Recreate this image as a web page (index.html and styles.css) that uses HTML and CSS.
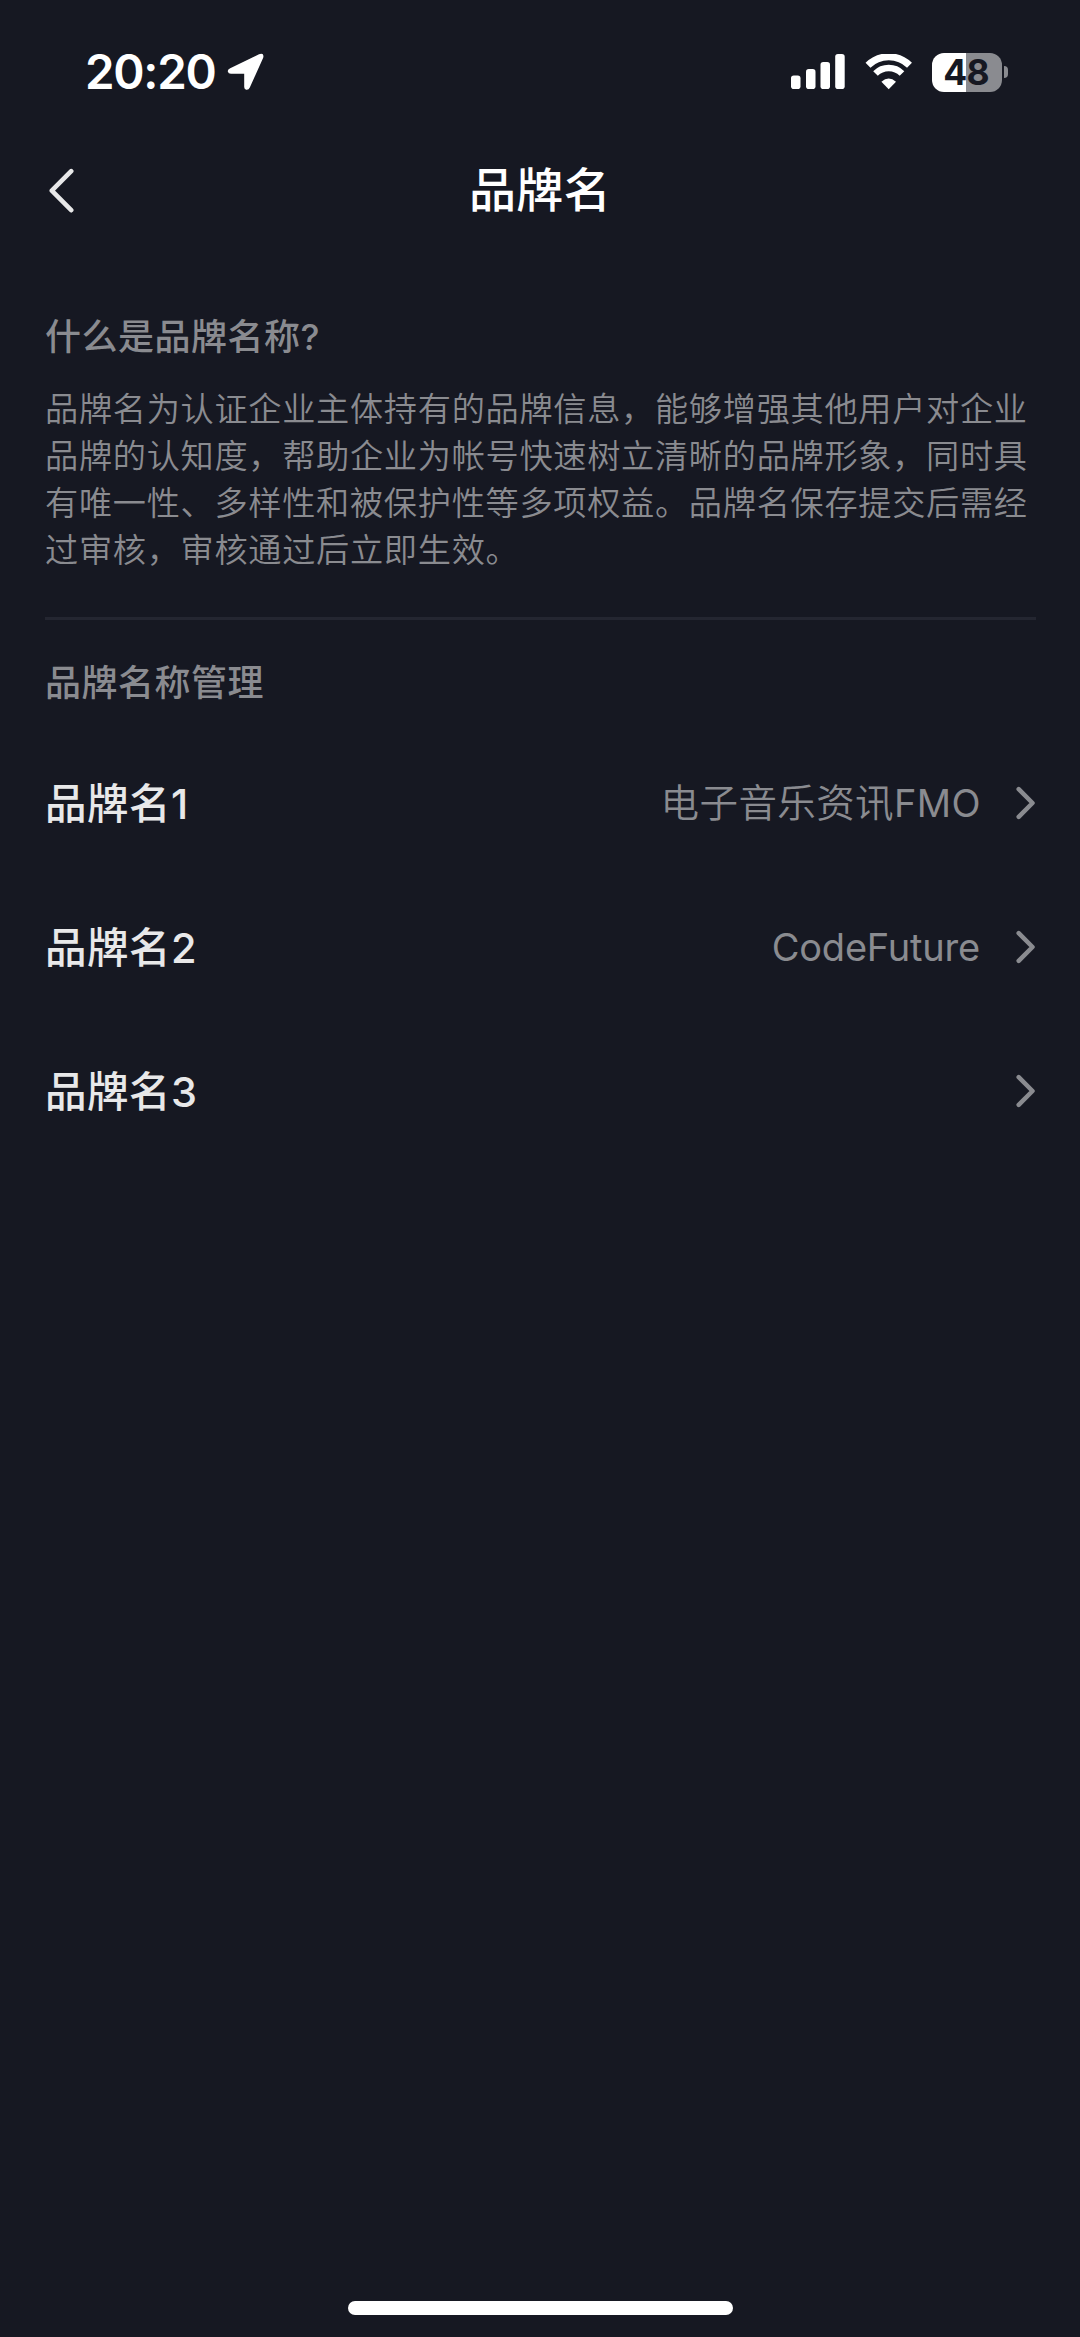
FILE: index.html
```html
<!DOCTYPE html>
<html lang="zh-CN">
<head>
<meta charset="utf-8">
<title>品牌名</title>
<link rel="stylesheet" href="styles.css">
</head>
<body>
<div class="screen">
  <header class="status">
    <div class="status-left">
      <span class="time">20:20</span>
      <svg class="location" width="38" height="38" viewBox="0 0 38 38"><path d="M3.200 15.300 32 1.200Q37.500-.5 36.200 4.800L22.800 34.600Q21.600 37.200 19.100 36.700 17.200 36.200 17.200 34V20.700H3.900Q1.300 20.600.8 18.400.5 16.600 3.200 15.300Z" fill="#fff"/></svg>
    </div>
    <div class="status-right">
      <svg width="54" height="36" viewBox="0 0 54 36" fill="#fff"><rect y="21.500" width="9.500" height="13.500" rx="2.800"/><rect x="15" y="15" width="9.500" height="20" rx="2.800"/><rect x="29.500" y="8" width="9.500" height="27" rx="2.800"/><rect x="44.200" y="0" width="9.500" height="35" rx="2.800"/></svg>
      <svg class="wifi" width="48" height="36" viewBox="0 0 48 36" fill="none" stroke="#fff"><path d="M3 11.300a29.500 29.500 0 0 1 41.500 0" stroke-width="7"/><path d="M10.500 19.500a18.800 18.800 0 0 1 26.500 0" stroke-width="6.500"/><path d="M23.700 35.300 16.400 27.800Q23.700 21 31 27.800Z" fill="#fff" stroke="none"/></svg>
      <div class="battery"><span class="battery-body">48</span><span class="battery-tip"></span></div>
    </div>
  </header>
  <nav class="nav">
    <svg class="back" width="28" height="48" viewBox="0 0 28 48"><path d="M25.200 4.200 5.800 23.700 25.200 43.200" fill="none" stroke="#e8e8e9" stroke-width="4.600" stroke-linecap="round" stroke-linejoin="round"/></svg>
    <h1 class="title">品牌名</h1>
  </nav>
  <main class="content">
    <section class="intro">
      <h2 class="heading">什么是品牌名称?</h2>
      <p class="description">品牌名为认证企业主体持有的品牌信息，能够增强其他用户对企业<br>品牌的认知度，帮助企业为帐号快速树立清晰的品牌形象，同时具<br>有唯一性、多样性和被保护性等多项权益。品牌名保存提交后需经<br>过审核，审核通过后立即生效。</p>
    </section>
    <section class="manage">
      <h2 class="heading">品牌名称管理</h2>
      <ul class="list">
        <li class="row"><span class="label">品牌名1</span><span class="value">电子音乐资讯<span class="regular">FMO</span></span><svg class="chevron" width="22" height="36" viewBox="0 0 22 36"><path d="M4.700 4.200 18.500 18 4.700 31.800"/></svg></li>
        <li class="row"><span class="label">品牌名2</span><span class="value latin">CodeFuture</span><svg class="chevron" width="22" height="36" viewBox="0 0 22 36"><path d="M4.700 4.200 18.500 18 4.700 31.800"/></svg></li>
        <li class="row"><span class="label">品牌名3</span><span class="value"></span><svg class="chevron" width="22" height="36" viewBox="0 0 22 36"><path d="M4.700 4.200 18.500 18 4.700 31.800"/></svg></li>
      </ul>
    </section>
  </main>
  <div class="home-indicator"></div>
</div>
</body>
</html>
```
FILE: styles.css
```css
* { box-sizing: border-box; }
body {
  margin: 0;
  background: #161822;
  color: #e8e8e9;
  font-family: Inter, "Noto Sans CJK SC", sans-serif;
}
h1, h2, p, ul { margin: 0; padding: 0; }
svg { display: block; flex: none; }
.screen { height: 2337px; display: flex; flex-direction: column; }
.status {
  height: 144px;
  padding: 0 72px 0 85px;
  display: flex;
  justify-content: space-between;
  align-items: center;
  color: #fff;
}
.status-left, .status-right { display: flex; align-items: center; }
.status-left { gap: 11px; }
.time { font-size: 47.5px; font-weight: 600; line-height: 60px; letter-spacing: -1.3px; }
.wifi { margin-left: 20px; }
.battery { display: flex; align-items: center; gap: 2px; margin-left: 19px; }
.battery-body {
  width: 70px;
  height: 39px;
  border-radius: 12px;
  background: linear-gradient(90deg, #fff 34px, #8a8b90 34px);
  color: #161822;
  font-size: 35.500px;
  font-weight: 700;
  line-height: 39px;
  letter-spacing: -0.8px;
  padding-right: 2px;
  text-align: center;
}
.battery-tip { width: 4px; height: 12px; border-radius: 0 6px 6px 0; background: #8a8b90; }
.nav {
  height: 94px;
  padding: 0 46px;
  display: grid;
  grid-template-columns: 28px 1fr 28px;
  align-items: center;
}
.title { color: #fff; font-size: 47px; font-weight: 500; line-height: 58px; letter-spacing: 0.3px; padding-bottom: 2px; text-align: center; }
.content { flex: 1; padding: 0 44px 0 45px; }
.intro { padding: 74px 0 43px; border-bottom: 3px solid #242631; }
.heading { color: #8a8b90; font-size: 36px; font-weight: 500; line-height: 50px; letter-spacing: 0.5px; }
.description {
  margin-top: 24px;
  color: #8a8b90;
  font-size: 33.2px;
  font-weight: 350;
  line-height: 47px;
  letter-spacing: 0.7px;
  white-space: nowrap;
}
.manage { padding-top: 38px; }
.list { list-style: none; margin-top: 23px; }
.row { height: 144px; display: flex; align-items: center; }
.label { flex: 1; padding-top: 2px; font-size: 41.500px; font-weight: 500; line-height: 58px; letter-spacing: 0.5px; }
.value { color: #8a8b90; font-size: 38.500px; font-weight: 350; line-height: 54px; letter-spacing: 0.4px; margin-right: 33px; }
.regular { font-size: 38px; font-weight: 400; }
.latin { font-size: 38px; font-weight: 400; letter-spacing: -0.2px; margin-right: 34px; }
.chevron { fill: none; stroke: #8a8b90; stroke-width: 4.500; stroke-linecap: round; stroke-linejoin: round; }
.home-indicator { width: 385px; height: 14px; margin: 0 auto 22px; border-radius: 7px; background: #fff; }
```
